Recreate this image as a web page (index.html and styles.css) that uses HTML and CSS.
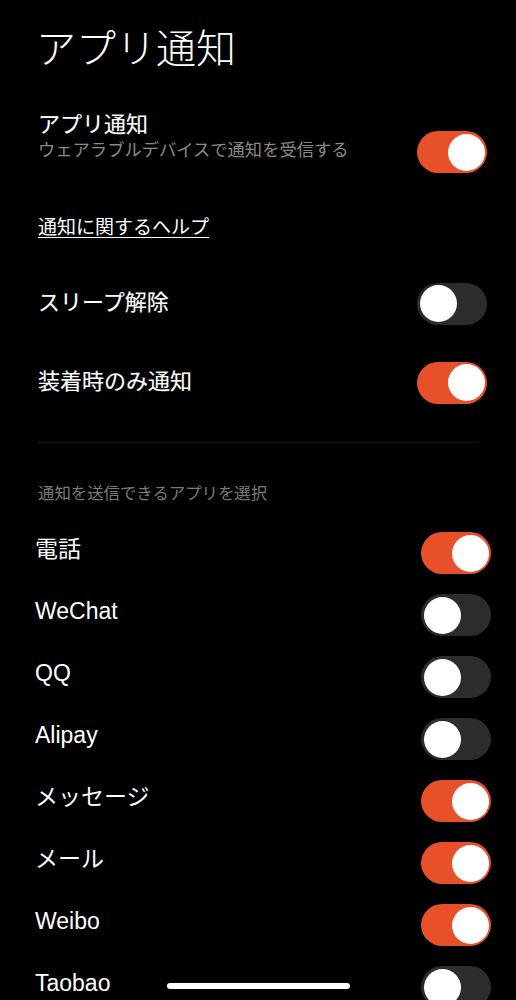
FILE: index.html
```html
<!DOCTYPE html>
<html>
<head>
    <meta charset="utf-8"/>
    <title>アプリ通知</title>
    <link rel="stylesheet" href="styles.css">
</head>

<body>
<div class="page">
    <h1 class="title">アプリ通知</h1>

    <div class="main-row">
        <div class="main-text">
            <p class="label">アプリ通知</p>
            <p class="sub">ウェアラブルデバイスで通知を受信する</p>
        </div>
        <span class="switch on main-switch"></span>
    </div>

    <a class="help">通知に関するヘルプ</a>

    <div class="opt-list">
        <div class="opt-row">
            <span class="label">スリープ解除</span>
            <span class="switch"></span>
        </div>
        <div class="opt-row">
            <span class="label">装着時のみ通知</span>
            <span class="switch on"></span>
        </div>
    </div>

    <div class="divider"></div>

    <p class="section-head">通知を送信できるアプリを選択</p>

    <ul class="apps">
        <li><span class="app-name">電話</span><span class="switch on"></span></li>
        <li><span class="app-name">WeChat</span><span class="switch"></span></li>
        <li><span class="app-name">QQ</span><span class="switch"></span></li>
        <li><span class="app-name">Alipay</span><span class="switch"></span></li>
        <li><span class="app-name">メッセージ</span><span class="switch on"></span></li>
        <li><span class="app-name">メール</span><span class="switch on"></span></li>
        <li><span class="app-name">Weibo</span><span class="switch on"></span></li>
        <li><span class="app-name">Taobao</span><span class="switch"></span></li>
    </ul>
</div>
<div class="home-bar"></div>
</body>
</html>
```

FILE: styles.css
```css
* {
    margin: 0;
    padding: 0;
}
html, body {
    background: #000;
}
body {
    color: #fff;
    font-family: "Liberation Sans", "Noto Sans CJK JP", sans-serif;
    overflow: hidden;
    height: 1000px;
}
.page {
    padding-top: 22px;
}
.title {
    margin-left: 36px;
    font-size: 40px;
    line-height: 48px;
    font-weight: 300;
    font-family: "Noto Sans CJK JP", sans-serif;
}

/* 上部の設定 */
.main-row {
    display: flex;
    justify-content: space-between;
    align-items: flex-start;
    margin-top: 37px;
    padding: 0 29px 0 38px;
    height: 56px;
}
.label {
    font-size: 22px;
    line-height: 30px;
    font-weight: 400;
    -webkit-text-stroke: 0.15px #fff;
    font-family: "Noto Sans CJK JP", sans-serif;
}
.sub {
    font-size: 17.3px;
    line-height: 24px;
    color: #8a8a8a;
    font-family: "Noto Sans CJK JP", sans-serif;
}
.main-switch {
    margin-top: 24px;
}
.help {
    display: inline-block;
    margin: 50px 0 0 38px;
    font-size: 19px;
    line-height: 26px;
    font-family: "Noto Sans CJK JP", sans-serif;
    text-decoration: underline;
    text-underline-offset: 3px;
}
.opt-list {
    margin-top: 25px;
}
.opt-row {
    display: flex;
    justify-content: space-between;
    align-items: center;
    height: 79px;
    padding: 0 29px 0 38px;
}
.opt-row .label {
    margin-bottom: 8px;
}
.divider {
    margin: 20px 38px 0 38px;
    height: 1px;
    background: #161616;
}
.section-head {
    margin: 38px 0 0 38px;
    font-size: 16.4px;
    line-height: 22px;
    color: #7a7a7a;
    font-family: "Noto Sans CJK JP", sans-serif;
}

/* アプリ一覧 */
.apps {
    list-style: none;
    margin-top: 19px;
}
.apps li {
    display: flex;
    justify-content: space-between;
    align-items: center;
    height: 62px;
    padding: 0 25px 0 35px;
}
.app-name {
    font-size: 23px;
    line-height: 30px;
    margin-bottom: 8px;
}

/* スイッチ */
.switch {
    position: relative;
    display: block;
    flex: none;
    width: 70px;
    height: 42px;
    border-radius: 21px;
    background: #2c2c2e;
}
.switch::after {
    content: "";
    position: absolute;
    top: 2.5px;
    left: 2.5px;
    width: 37px;
    height: 37px;
    border-radius: 50%;
    background: #fff;
}
.switch.on {
    background: #e8502a;
}
.switch.on::after {
    left: 30.5px;
}

.home-bar {
    position: fixed;
    left: 167px;
    top: 983px;
    width: 183px;
    height: 6px;
    border-radius: 3px;
    background: #fff;
}
```
